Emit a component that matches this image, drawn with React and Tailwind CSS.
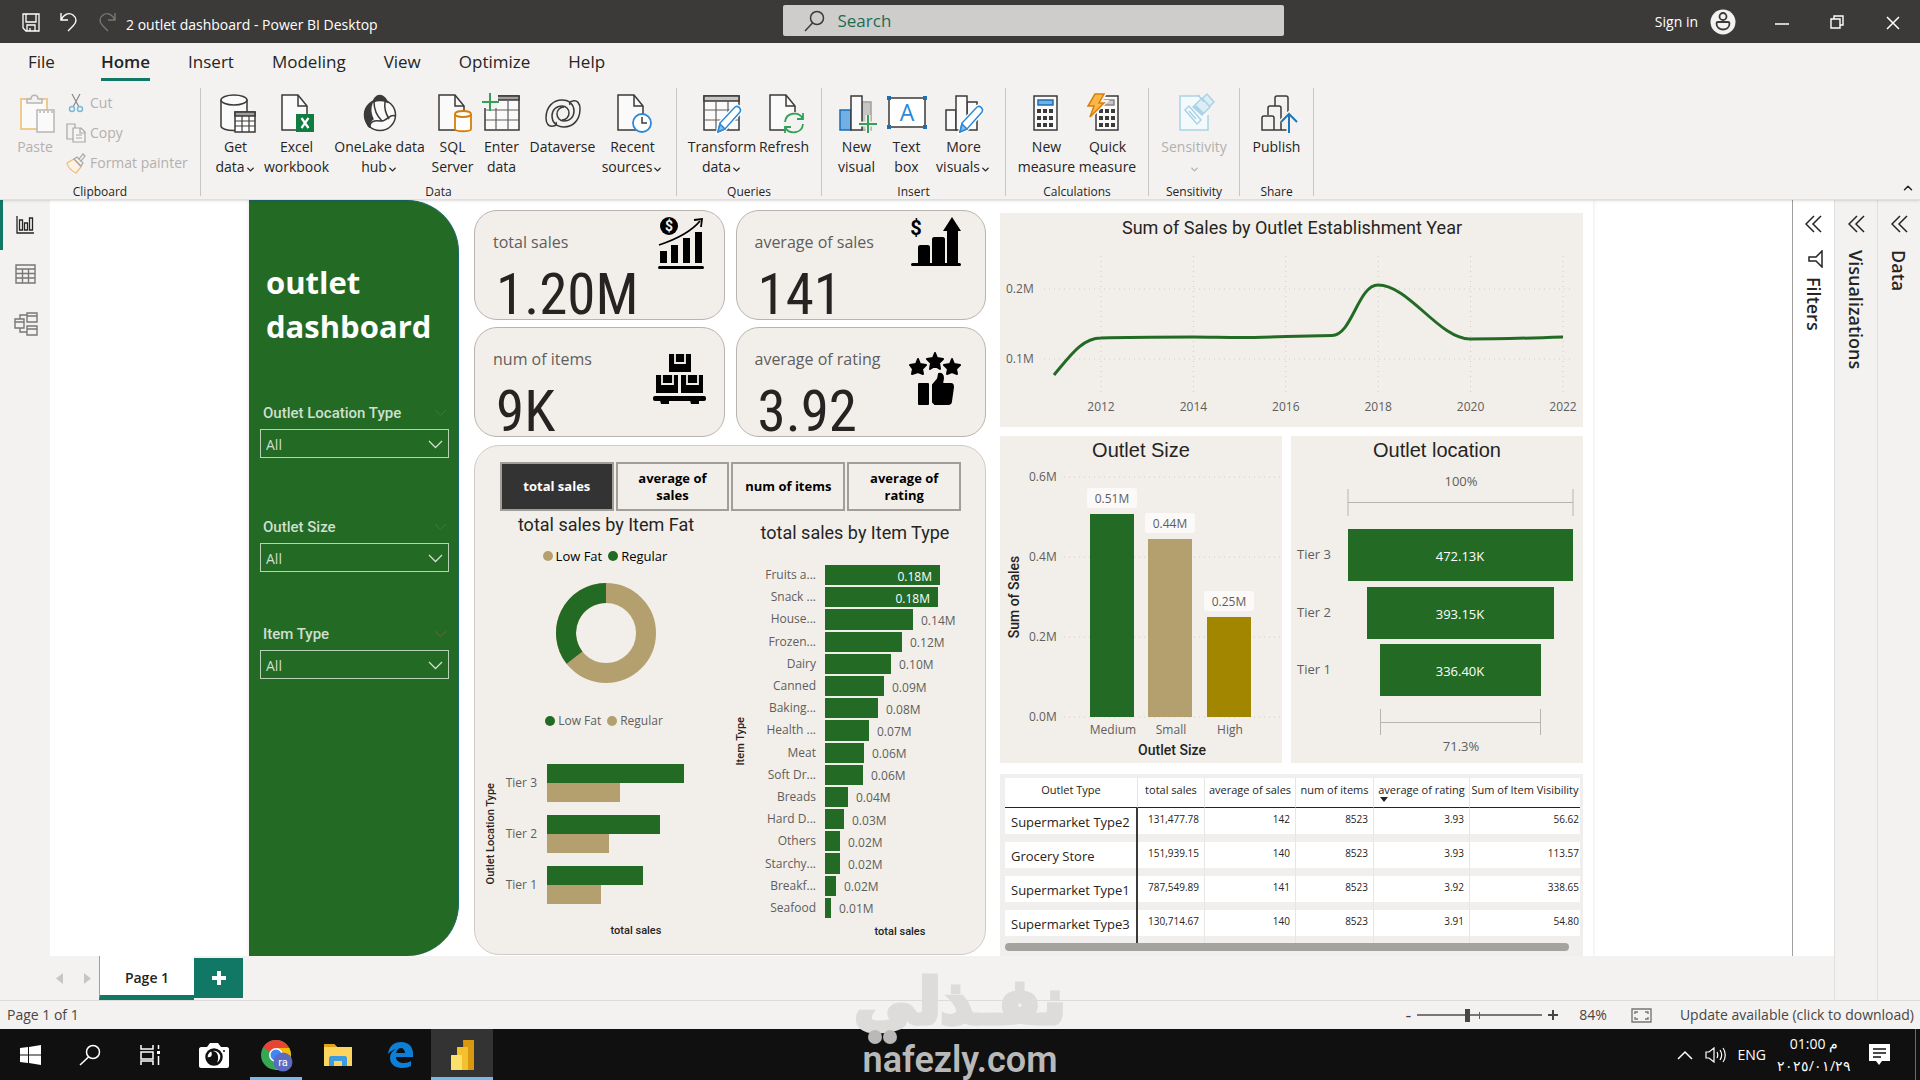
import React, { useState } from 'react';
import { ChevronDown, ChevronUp } from 'lucide-react';

const GREEN = '#236b25';
const TAN = '#b3a06e';
const GOLD = '#a38600';

const MENU = ['File', 'Home', 'Insert', 'Modeling', 'View', 'Optimize', 'Help'];

const ITEM_TYPES = [
  { name: 'Fruits a...', value: '0.18M', width: 115, inside: true },
  { name: 'Snack ...', value: '0.18M', width: 113, inside: true },
  { name: 'House...', value: '0.14M', width: 88 },
  { name: 'Frozen...', value: '0.12M', width: 77 },
  { name: 'Dairy', value: '0.10M', width: 66 },
  { name: 'Canned', value: '0.09M', width: 59 },
  { name: 'Baking...', value: '0.08M', width: 53 },
  { name: 'Health ...', value: '0.07M', width: 44 },
  { name: 'Meat', value: '0.06M', width: 39 },
  { name: 'Soft Dr...', value: '0.06M', width: 38 },
  { name: 'Breads', value: '0.04M', width: 23 },
  { name: 'Hard D...', value: '0.03M', width: 19 },
  { name: 'Others', value: '0.02M', width: 15 },
  { name: 'Starchy...', value: '0.02M', width: 15 },
  { name: 'Breakf...', value: '0.02M', width: 11 },
  { name: 'Seafood', value: '0.01M', width: 6 },
];

const TIERS = [
  { name: 'Tier 3', low: 137, regular: 73 },
  { name: 'Tier 2', low: 113, regular: 62 },
  { name: 'Tier 1', low: 96, regular: 54 },
];

const OUTLETS = [
  { type: 'Supermarket Type2', sales: '131,477.78', avg: '142', items: '8523', rating: '3.93', vis: '56.62' },
  { type: 'Grocery Store', sales: '151,939.15', avg: '140', items: '8523', rating: '3.93', vis: '113.57' },
  { type: 'Supermarket Type1', sales: '787,549.89', avg: '141', items: '8523', rating: '3.92', vis: '338.65' },
  { type: 'Supermarket Type3', sales: '130,714.67', avg: '140', items: '8523', rating: '3.91', vis: '54.80' },
];

/* ---------- ribbon icons ---------- */

function Icon({ children, w = 40, h = 40 }) {
  return (
    <svg width={w} height={h} viewBox={`0 0 ${w} ${h}`} fill="none" stroke="#3b3a39" strokeWidth="1.5" overflow="visible" aria-hidden="true">
      {children}
    </svg>
  );
}

const Page = ({ x = 6 }) => (
  <g transform={`translate(${x} 0)`}>
    <path d="M1 2h16l9 11v24H1z" fill="#fafafa" />
    <path d="M17 2v11h9" />
  </g>
);

const Pencil = () => (
  <g stroke="#2b88d8">
    <path d="M17 39l2-9 15-16c3-2 7 2 5 5L24 36z" fill="#fff" stroke="#fff" strokeWidth="4" />
    <path d="M17 39l2-9 15-16c3-2 7 2 5 5L24 36z" fill="#fff" />
    <path d="M17 39l2-8 5 5z" fill="#83beec" />
  </g>
);

const GetDataIcon = () => (
  <Icon>
    <path d="M5 7v26c0 2.500 5.500 4.500 13 4.500 7 0 13-2 13-4.500V7" fill="#fafafa" />
    <ellipse cx="18" cy="7" rx="13" ry="5" fill="#fafafa" />
    <path d="M19 19h20v20H19z" fill="#fff" />
    <path d="M19 19h20v4H19z" fill="#a19f9d" />
    <path d="M19 28h20M19 33h20M26 23v16M33 23v16" strokeWidth="1.200" />
  </Icon>
);

const ExcelIcon = () => (
  <Icon>
    <Page x={4} />
    <path d="M19 21h18v18H19z" fill="#107c41" stroke="none" />
    <path d="M24.500 25l7 10M31.500 25l-7 10" stroke="#fff" strokeWidth="2.200" />
  </Icon>
);

const OneLakeIcon = () => (
  <Icon>
    <circle cx="20" cy="22" r="15.500" fill="#fafafa" />
    <path d="M13 9C15 3 19 1.500 22 3c2 1 4 3 5 6-5-2-9-2-14 0z" fill="#3b3a39" />
    <path d="M12 10C5 14 3 22 7 30c1 3 2 4 3 4-1-4 0-6 3-8-3-6-3-11-1-16z" fill="#3b3a39" />
    <path d="M14 9c0 8 4 15 8 19M10 35c-1-6 4-8 10-7 7 1 10-8 15-5M25 9c-1 6 1 12 4 17" />
  </Icon>
);

const SqlIcon = () => (
  <Icon>
    <Page x={5} />
    <path d="M22 21v15c0 3 16 3 16 0V21" fill="#fff" stroke="#d67f0b" strokeWidth="1.800" />
    <ellipse cx="30" cy="21" rx="8" ry="3" fill="#fff" stroke="#d67f0b" strokeWidth="1.800" />
  </Icon>
);

const EnterIcon = () => (
  <Icon>
    <path d="M3 3h34v34H3z" fill="#fafafa" />
    <path d="M14 3h23v4H14z" fill="#a19f9d" />
    <path d="M3 17h34M3 27h34M14 8v29M26 8v29" strokeWidth="1.200" stroke="#605e5c" />
    <path d="M0 0h16v15H0z" fill="#f3f2f1" stroke="none" />
    <path d="M8 0v18M0 9h17" stroke="#33a05a" strokeWidth="2" />
  </Icon>
);

const DataverseIcon = () => (
  <Icon>
    <path d="M10 33c-4 1-7-2-7-8C3 14 10 7 19 7c8 0 12 5 12 11 0 6-4 10-10 10-4 0-7-3-7-7 0-4 3-7 7-7" />
    <path d="M30 8c4-1 7 2 7 8 0 11-7 18-16 18-8 0-12-5-12-11 0-6 4-10 10-10 4 0 7 3 7 7 0 4-3 7-7 7" />
    <path d="M10 33c3 0 4-2 3-4M30 8c-3 0-4 2-3 4" />
  </Icon>
);

const RecentIcon = () => (
  <Icon>
    <Page x={4} />
    <circle cx="29" cy="30" r="9" fill="#fff" stroke="#2b88d8" strokeWidth="1.800" />
    <path d="M29 24v6h5" />
  </Icon>
);

const TransformIcon = () => (
  <Icon w={42}>
    <path d="M3 3h35v34H3z" fill="#fafafa" />
    <path d="M3 3h35v5H3z" fill="#c8c6c4" />
    <path d="M3 17h35M3 27h35M15 8v29M27 8v29" strokeWidth="1.200" stroke="#605e5c" />
    <Pencil />
  </Icon>
);

const RefreshIcon = () => (
  <Icon>
    <Page x={5} />
    <circle cx="30" cy="30" r="11" fill="#f3f2f1" stroke="none" />
    <path d="M21 29c1-10 14-11 18-3M39 31c-1 10-14 11-18 3M39 20v6h-6M21 40v-6h6" stroke="#33a05a" strokeWidth="1.800" />
  </Icon>
);

const NewVisualIcon = () => (
  <Icon>
    <path d="M3 17h11v20H3z" fill="#71afe5" stroke="#1a6fb5" />
    <path d="M25 9h9v28h-9z" fill="#c8c6c4" stroke="#a19f9d" />
    <path d="M14 3h11v34H14z" fill="#fafafa" />
    <path d="M31 22v18M22 31h18" stroke="#f3f2f1" strokeWidth="5" />
    <path d="M31 22v18M22 31h18" stroke="#33a05a" strokeWidth="2" />
  </Icon>
);

const TextBoxIcon = () => (
  <Icon>
    <path d="M2 5h36v29H2z" fill="#fff" />
    <text x="20" y="28" textAnchor="middle" stroke="none" fill="#2b88d8" fontSize="23" fontFamily="Open Sans">A</text>
    <path d="M0 3h4v4H0zM36 3h4v4h-4zM0 32h4v4H0zM36 32h4v4h-4z" fill="#1a6fb5" stroke="none" />
  </Icon>
);

const MoreVisualsIcon = () => (
  <Icon w={42}>
    <path d="M3 17h10v20H3zM24 9h10v28H24z" fill="#fafafa" />
    <path d="M13 3h11v34H13z" fill="#fafafa" />
    <Pencil />
  </Icon>
);

const Keys = ({ x }) => (
  <g fill="#3b3a39" stroke="none">
    {[16, 23, 30].map(y => [0, 6, 12].map(k => <rect key={`${y}-${k}`} x={x + k} y={y} width="4" height="4" />))}
  </g>
);

const MeasureIcon = () => (
  <Icon>
    <path d="M7 3h23v34H7z" fill="#fafafa" />
    <path d="M11 7h15v5H11z" fill="#71afe5" stroke="#1a6fb5" />
    <Keys x={10} />
  </Icon>
);

const QuickIcon = () => (
  <Icon>
    <g transform="translate(-4 0)">
      <path d="M12 3h22v34H12z" fill="#fafafa" />
      <path d="M19 7h11v5H19z" fill="#c8c6c4" stroke="#8a8886" />
      <Keys x={15} />
      <path d="M11 0h10l-5 9h5L6 24l4-11H4z" fill="#ffb648" stroke="#f3f2f1" strokeWidth="4" />
      <path d="M11 1h9l-5 9h5L6 24l4-11H4z" fill="#ffb648" stroke="#d67f0b" />
    </g>
  </Icon>
);

const SensitivityIcon = () => (
  <Icon>
    <g stroke="#a9d3e6">
      <path d="M26 3H6v34h28V22" fill="#f4fafc" />
      <path d="M11 17l4-4 12 14-4 4zM15 18l7 8" />
      <path d="M19 14l9-9 8 9-8 8zM24 2l6 7M29 5l4-4 7 8-5 5" fill="#dcedf5" />
      <path d="M21 13l8 8" strokeWidth="3" />
    </g>
  </Icon>
);

const PublishIcon = () => (
  <Icon>
    <g transform="translate(3 0)">
      <path d="M15 13V5c0-1 1-2 2-2h9c1 0 2 1 2 2v14M8 22v-7c0-1 1-2 2-2h9c1 0 2 1 2 2v22M2 37V25c0-1 1-2 2-2h8c1 0 2 1 2 2v12zM14 37h14" />
      <path d="M29 40V22M21 29l8-8 8 8" stroke="#f3f2f1" strokeWidth="5" />
      <path d="M29 40V22M21 29l8-8 8 8" stroke="#1f77b4" strokeWidth="2" />
    </g>
  </Icon>
);

const PasteIcon = () => (
  <Icon>
    <g stroke="#f0c98d" strokeWidth="2">
      <path d="M6 6h26v30H6z" fill="#fbfaf8" />
    </g>
    <path d="M12 10V6h4c0-5 7-5 7 0h4v4z" fill="#f3f2f1" stroke="#b8b6b4" />
    <path d="M22 17h17v22H22z" fill="#fafafa" stroke="#b8b6b4" />
    <path d="M24 19h14" stroke="#b8b6b4" strokeDasharray="2 2" />
  </Icon>
);

const CutIcon = () => (
  <Icon w={20} h={20}>
    <path d="M6 1l7 13M14 1L7 14" stroke="#8a8886" strokeWidth="1.200" />
    <circle cx="6" cy="16" r="2.500" stroke="#7db8dc" />
    <circle cx="14" cy="16" r="2.500" stroke="#7db8dc" />
  </Icon>
);

const CopyIcon = () => (
  <Icon w={20} h={20}>
    <g stroke="#a8a6a4" strokeWidth="1.200">
      <path d="M1 1h8v15H1z" />
      <path d="M7 5h8l4 4v10H7z" fill="#f6f5f4" />
      <path d="M14 5v5h5M10 12h6M10 15h6" />
    </g>
  </Icon>
);

const PainterIcon = () => (
  <Icon w={20} h={20}>
    <path d="M1 10l7-4 7 8-5 6c-4-2-8-5-9-10z" fill="#fbf3e6" stroke="#efb878" strokeWidth="1.200" />
    <path d="M8 6l3-2 6 6-2 3zM13 6l4-5 2 2-4 5" fill="#f3f2f1" stroke="#a8a6a4" strokeWidth="1.200" />
  </Icon>
);

const RIBBON = [
  {
    name: 'Data',
    box: 'w-[476px]',
    items: [
      { lines: ['Get', 'data'], more: true, icon: GetDataIcon, box: 'w-14' },
      { lines: ['Excel', 'workbook'], icon: ExcelIcon, box: 'w-[66px]' },
      { lines: ['OneLake data', 'hub'], more: true, icon: OneLakeIcon, box: 'w-[100px]' },
      { lines: ['SQL', 'Server'], icon: SqlIcon, box: 'w-[46px]' },
      { lines: ['Enter', 'data'], icon: EnterIcon, box: 'w-[52px]' },
      { lines: ['Dataverse'], icon: DataverseIcon, box: 'w-[70px]' },
      { lines: ['Recent', 'sources'], more: true, icon: RecentIcon, box: 'w-[70px]' },
    ],
  },
  {
    name: 'Queries',
    box: 'w-[145px]',
    items: [
      { lines: ['Transform', 'data'], more: true, icon: TransformIcon, box: 'w-[70px]' },
      { lines: ['Refresh'], icon: RefreshIcon, box: 'w-[54px]' },
    ],
  },
  {
    name: 'Insert',
    box: 'w-[184px]',
    items: [
      { lines: ['New', 'visual'], icon: NewVisualIcon, box: 'w-[46px]' },
      { lines: ['Text', 'box'], icon: TextBoxIcon, box: 'w-[54px]' },
      { lines: ['More', 'visuals'], more: true, icon: MoreVisualsIcon, box: 'w-[60px]' },
    ],
  },
  {
    name: 'Calculations',
    box: 'w-[143px]',
    items: [
      { lines: ['New', 'measure'], icon: MeasureIcon, box: 'w-[61px]' },
      { lines: ['Quick', 'measure'], icon: QuickIcon, box: 'w-[61px]' },
    ],
  },
  {
    name: 'Sensitivity',
    box: 'w-[91px]',
    items: [{ lines: ['Sensitivity', ''], more: true, disabled: true, icon: SensitivityIcon, box: 'w-[76px]' }],
  },
  {
    name: 'Share',
    box: 'w-[75px]',
    items: [{ lines: ['Publish'], icon: PublishIcon, box: 'w-[60px]' }],
  },
];

/* ---------- window chrome ---------- */

function TitleBar() {
  return (
    <header className="relative flex h-[43px] items-center bg-[#3b3a39] text-white">
      <div className="flex items-center gap-5 pl-[22px] pt-px">
        <button aria-label="Save">
          <svg width="18" height="19" viewBox="0 0 18 19" fill="none" stroke="#fff" strokeWidth="1.300">
            <path d="M1 1h16v17H4l-3-3zM4 1v8h10V1M5 18v-6h8v6M8 18v-3" />
          </svg>
        </button>
        <button aria-label="Undo">
          <svg width="18" height="20" viewBox="0 0 18 20" fill="none" stroke="#fff" strokeWidth="1.400">
            <path d="M1 1v7h7M1 8c3-6 8-8 12-5 4 3 4 7 0 11l-5 5" />
          </svg>
        </button>
        <button aria-label="Redo" disabled>
          <svg width="18" height="20" viewBox="0 0 18 20" fill="none" stroke="#797775" strokeWidth="1.400">
            <path d="M17 1v7h-7M17 8c-3-6-8-8-12-5-4 3-4 7 0 11l5 5" />
          </svg>
        </button>
      </div>
      <span className="pl-[10px] pt-[6px] text-sm">2 outlet dashboard - Power BI Desktop</span>

      <div className="absolute inset-x-0 top-[5px] mx-auto flex h-[31px] w-[501px] translate-x-[73px] items-center rounded-xs bg-[#cecdcc] pl-[21px]">
        <svg width="21" height="22" viewBox="0 0 21 22" fill="none" stroke="#3b3a39" strokeWidth="1.500">
          <circle cx="13" cy="8" r="6.500" />
          <path d="M8.500 13L1 21" />
        </svg>
        <input
          aria-label="Search"
          placeholder="Search"
          className="ml-[13px] flex-1 bg-transparent text-[17px] outline-none placeholder:text-[#1f6b52]"
        />
      </div>

      <div className="ml-auto flex items-center">
        <button className="flex items-center gap-[12px] text-sm">
          Sign in
          <svg width="26" height="26" viewBox="0 0 26 26" fill="none" stroke="#3b3a39" strokeWidth="1.800">
            <circle cx="13" cy="13" r="12.500" fill="#f3f2f1" stroke="none" />
            <circle cx="13" cy="7.500" r="3.500" />
            <path d="M6.500 14.500c0-1 .5-1.500 1.500-1.500h10c1 0 1.500.5 1.500 1.500 0 8-13 8-13 0z" />
          </svg>
        </button>
        <button aria-label="Minimize" className="ml-[38px]">
          <svg width="16" height="16" stroke="#fff" strokeWidth="1.500"><path d="M1 10h14" /></svg>
        </button>
        <button aria-label="Restore" className="ml-[40px]">
          <svg width="15" height="16" viewBox="0 0 15 16" fill="none" stroke="#fff" strokeWidth="1.400">
            <path d="M1 5h9v9H1zM4 5V2h9v9h-3" />
          </svg>
        </button>
        <button aria-label="Close" className="ml-[41px] mr-[20px]">
          <svg width="14" height="16" viewBox="0 0 14 16" stroke="#fff" strokeWidth="1.500">
            <path d="M1 3l12 12M13 3L1 15" />
          </svg>
        </button>
      </div>
    </header>
  );
}

function RibbonButton({ item }) {
  const Glyph = item.icon;
  return (
    <button
      disabled={item.disabled}
      className={`${item.box} flex flex-col items-center text-sm leading-5 whitespace-nowrap ${item.disabled ? 'text-[#b3b0ad]' : ''}`}
    >
      <Glyph />
      <span className="mt-1">{item.lines[0]}</span>
      {item.lines.length > 1 && (
        <span className="flex h-5 items-center">
          {item.lines[1]}
          {item.more && <ChevronDown size={11} strokeWidth={3} className="mt-1" />}
        </span>
      )}
    </button>
  );
}

function Ribbon() {
  return (
    <div className="relative z-10 border-b border-[#e1dfdd] bg-[#f3f2f1] text-[#252423] shadow-sm">
      <nav className="flex h-[38px] gap-[38px] pl-[28px] text-[17px]">
        {MENU.map(m => (
          <button
            key={m}
            className={`h-[38px] border-b-3 pt-[2px] leading-6 ${m === 'Home' ? 'ml-[8px] border-[#117865] font-semibold' : 'border-transparent'}`}
          >
            {m}
          </button>
        ))}
      </nav>
      <div className="flex h-[118px] pt-[7px]">
        <section className="flex w-[200px] flex-col">
          <div className="flex pl-[15px] pt-[5px] text-sm text-[#b3b0ad]">
            <button className="flex w-10 flex-col items-center leading-5" disabled>
              <PasteIcon />
              <span className="mt-1">Paste</span>
            </button>
            <div className="ml-[11px] flex flex-col gap-[10px]">
              <button className="flex items-center gap-1 leading-5" disabled><CutIcon />Cut</button>
              <button className="flex items-center gap-1 leading-5" disabled><CopyIcon />Copy</button>
              <button className="flex items-center gap-1 leading-5 whitespace-nowrap" disabled><PainterIcon />Format painter</button>
            </div>
          </div>
          <span className="-mb-px mt-auto text-center text-xs">Clipboard</span>
        </section>
        {RIBBON.map((g, i) => (
          <section
            key={g.name}
            className={`${g.box} mb-[3px] flex flex-col border-l border-[#c8c6c4] ${i === RIBBON.length - 1 ? 'border-r' : ''}`}
          >
            <div className={`flex justify-center pt-[5px] ${i === 0 ? 'pr-[2px]' : ''}`}>
              {g.items.map(item => <RibbonButton key={item.lines[0]} item={item} />)}
            </div>
            <span className="-mb-1 mt-auto text-center text-xs">{g.name}</span>
          </section>
        ))}
        <button aria-label="Collapse ribbon" className="ml-auto self-end pb-1 pr-[5px]">
          <ChevronUp size={14} strokeWidth={2.5} />
        </button>
      </div>
    </div>
  );
}

function ViewRail() {
  return (
    <nav className="flex w-[50px] shrink-0 flex-col bg-[#f3f2f1]">
      <button aria-label="Report view" className="flex h-[50px] items-center border-l-3 border-[#117865] pl-[13px]">
        <svg width="18" height="18" viewBox="0 0 18 18" fill="none" stroke="#252423" strokeWidth="1.300">
          <path d="M1 0v17h17M3.500 4h3v10h-3zM8.500 7h3v7h-3zM13.500 2h3v12h-3z" />
        </svg>
      </button>
      <button aria-label="Table view" className="flex h-[48px] items-center pl-[15px]">
        <svg width="21" height="20" viewBox="0 0 21 20" fill="none" stroke="#797775" strokeWidth="1.400">
          <path d="M1 1h19v18H1zM1 5h19M1 9.500h19M1 14h19M7.500 5v14M13.500 5v14" />
        </svg>
      </button>
      <button aria-label="Model view" className="flex h-[52px] items-center pl-[14px]">
        <svg width="24" height="24" viewBox="0 0 24 24" fill="none" stroke="#797775" strokeWidth="1.400">
          <path d="M1 7h9v9H1zM1 10h9M13 1h10v9H13zM13 4h10M13 14h10v9H13zM13 17h10M6 7V3h7M6 16v4h7" />
        </svg>
      </button>
    </nav>
  );
}

/* ---------- report page ---------- */

function Slicer({ id, label }) {
  return (
    <div>
      <div className="flex h-[18px] items-center justify-between pl-[3px] pr-[2px]">
        <label htmlFor={id} className="font-[Roboto] text-[15px] font-medium text-[#d0dfcf]">{label}</label>
        <svg width="13" height="8" fill="none" stroke="#5a6a3a"><path d="M1 1l5.500 5.500L12 1" /></svg>
      </div>
      <div className="relative mt-[7px]">
        <select
          id={id}
          className="h-[29px] w-full appearance-none border border-[#b9d3b8] bg-transparent pl-[5px] pt-[2px] text-sm text-[#d0dfcf]"
        >
          <option>All</option>
        </select>
        <svg className="pointer-events-none absolute right-[6px] top-[11px]" width="15" height="9" fill="none" stroke="#d0dfcf" strokeWidth="1.300">
          <path d="M1 1l6.500 6.500L14 1" />
        </svg>
      </div>
    </div>
  );
}

function SidePanel() {
  return (
    <aside className="w-[210px] shrink-0 rounded-r-[52px] border-r border-t border-[#1c6a6c] bg-[#236b25] pl-[11px] pr-[9px]">
      <h1 className="pl-[6px] pt-[59px] text-[31px] font-bold leading-[44px] text-white">outlet dashboard</h1>
      <div className="mt-[56px]">
        <Slicer id="slicer-location" label="Outlet Location Type" />
      </div>
      <div className="mt-[60px]">
        <Slicer id="slicer-size" label="Outlet Size" />
      </div>
      <div className="mt-[53px]">
        <Slicer id="slicer-type" label="Item Type" />
      </div>
    </aside>
  );
}

const SalesGrowthIcon = () => (
  <svg width="46" height="52" viewBox="0 0 46 52">
    <circle cx="11" cy="9" r="9" />
    <text x="11" y="14" textAnchor="middle" fill="#f2efea" fontSize="14" fontWeight="700" fontFamily="Roboto">$</text>
    <path d="M1 28C16 23 32 16 42 4" fill="none" stroke="#000" strokeWidth="1.800" />
    <path d="M36 3l8-1-1 8" fill="none" stroke="#000" strokeWidth="1.800" />
    <path d="M2 34h7v12H2zM13 28h7v18h-7zM25 21h7v25h-7zM37 15h7v31h-7z" />
    <rect y="49" width="46" height="3" rx="1.500" />
  </svg>
);

const AverageSalesIcon = () => (
  <svg width="50" height="50" viewBox="0 0 50 50">
    <text x="5" y="18" textAnchor="middle" fontSize="20" fontWeight="700" fontFamily="Roboto">$</text>
    <path d="M7 30c0-1 1-2 2-2h8c1 0 2 1 2 2v17H7zM21 22c0-1 1-2 2-2h9c1 0 2 1 2 2v25H21zM36 14h-4l9-14 9 14h-3v33H36z" />
    <rect y="46" width="50" height="3" rx="1.500" />
  </svg>
);

const BoxesIcon = () => (
  <svg width="53" height="50" viewBox="0 0 53 50">
    <path d="M16 0h22v18H16zM3 21h22v18H3zM28 21h22v18H28z" />
    <g fill="none" stroke="#f2efea" strokeWidth="1.800">
      <path d="M22 0v9h10V0M9 21v9h11v-9M34 21v9h11v-9" />
    </g>
    <path d="M25 1h3v5h-3zM13 22h3v5h-3zM38 22h3v5h-3z" />
    <rect y="42" width="53" height="5" rx="2" />
    <path d="M7 46h9v4H8zM37 46h9v4h-8z" />
  </svg>
);

const RatingIcon = () => (
  <svg width="52" height="53" viewBox="0 0 52 53">
    <g strokeLinejoin="round" stroke="#000" strokeWidth="2">
      <path d="M26 1l2 5 6 1-4 4 1 6-5-3-5 3 1-6-4-4 6-1z" />
      <path d="M9 7l2 5 6 1-4 4 1 5-5-2-6 2 1-5-3-4 6-1z" />
      <path d="M43 7l2 5 6 1-4 4 1 5-5-2-5 2 1-5-4-4 6-1z" />
      <path d="M10 32h9v20h-9zM24 33l5-6 1-5c2-1 4 1 4 4l-1 6h9c2 0 2 1 2 3l-2 14c0 2-1 3-3 3H26l-2-2z" />
    </g>
  </svg>
);

const KPIS = [
  { label: 'total sales', value: '1.20M', icon: SalesGrowthIcon, pad: 'pt-[6px] pr-5' },
  { label: 'average of sales', value: '141', icon: AverageSalesIcon, pad: 'pt-[6px] pr-6' },
  { label: 'num of items', value: '9K', icon: BoxesIcon, pad: 'pt-[26px] pr-[18px]' },
  { label: 'average of rating', value: '3.92', icon: RatingIcon, pad: 'pt-6 pr-6' },
];

function KpiCard({ kpi }) {
  const Glyph = kpi.icon;
  return (
    <div className="flex h-[110px] justify-between rounded-[23px] border border-[#b8b4af] bg-[#f2efea] pl-[18px]">
      <div className="pt-[21px]">
        <div className="text-base leading-5 text-[#605e5c]">{kpi.label}</div>
        <div className="mt-[19px] pl-[3px] font-['Roboto_Condensed',Roboto,sans-serif] text-[57px] leading-[48px] text-[#252423]">{kpi.value}</div>
      </div>
      <div className={kpi.pad}><Glyph /></div>
    </div>
  );
}

function Legend({ items, className }) {
  return (
    <div className={`flex items-center justify-center gap-[6px] ${className}`}>
      {items.map(([name, color]) => (
        <span key={name} className="flex items-center gap-[3px]">
          <svg width="10" height="10"><circle cx="5" cy="5" r="5" fill={color} /></svg>
          {name}
        </span>
      ))}
    </div>
  );
}

function FatColumn() {
  return (
    <div className="flex w-[250px] flex-col">
      <h2 className="pl-3 text-center font-[Roboto] text-lg leading-7 text-[#252423]">total sales by Item Fat</h2>
      <Legend className="mt-[7px] pl-[10px] text-[13px] leading-5 text-black" items={[['Low Fat', TAN], ['Regular', GREEN]]} />
      <svg className="ml-[81px] mt-[17px]" width="100" height="100" viewBox="0 0 100 100" fill="none" strokeWidth="20">
        <circle cx="50" cy="50" r="40" stroke={TAN} />
        {/* regular share, 232deg to 360deg */}
        <path d="M18.500 74.600A40 40 0 0 1 50 10" stroke={GREEN} />
      </svg>
      <Legend className="mt-7 pl-2 text-xs leading-5 text-[#605e5c]" items={[['Low Fat', GREEN], ['Regular', TAN]]} />
      <div className="mt-[33px] flex">
        <span className="w-[24px] rotate-180 self-center pr-[8px] text-center font-[Roboto] text-[11px] font-medium leading-4 text-[#252423] [writing-mode:vertical-rl]">
          Outlet Location Type
        </span>
        <div className="flex flex-1 flex-col gap-[13px]">
          {TIERS.map(t => (
            <div key={t.name} className="flex items-center">
              <span className="w-[38px] text-right text-xs text-[#605e5c]">{t.name}</span>
              <div className="ml-[10px]">
                <div className="h-[19px] bg-[#236b25]" style={{ width: t.low }} />
                <div className="h-[19px] bg-[#b3a06e]" style={{ width: t.regular }} />
              </div>
            </div>
          ))}
        </div>
      </div>
      <span className="mt-[19px] pl-[72px] text-center font-[Roboto] text-[11px] font-medium leading-4 text-[#252423]">total sales</span>
    </div>
  );
}

function TypeColumn() {
  return (
    <div className="flex flex-1 flex-col pt-[8px]">
      <h2 className="text-center font-[Roboto] text-lg leading-7 text-[#252423]">total sales by Item Type</h2>
      <div className="mt-[18px] flex h-[353px]">
        <span className="w-[25px] rotate-180 self-center pr-[8px] text-center font-[Roboto] text-[11px] font-medium leading-4 text-[#252423] [writing-mode:vertical-rl]">
          Item Type
        </span>
        <div className="flex flex-1 flex-col gap-[2px] text-xs">
          {ITEM_TYPES.map(t => (
            <div key={t.name} className="flex flex-1 items-center">
              <span className="w-[66px] text-right leading-4 text-[#605e5c]">{t.name}</span>
              <div className="ml-[9px] flex h-full items-center justify-end bg-[#236b25]" style={{ width: t.width }}>
                {t.inside && <span className="pr-[8px] pt-[3px] leading-4 text-white">{t.value}</span>}
              </div>
              {!t.inside && <span className="pl-[8px] pt-[3px] leading-4 text-[#605e5c]">{t.value}</span>}
            </div>
          ))}
        </div>
      </div>
      <span className="mt-[6px] pl-[90px] text-center font-[Roboto] text-[11px] font-medium leading-4 text-[#252423]">total sales</span>
    </div>
  );
}

function SalesPanel() {
  const [active, setActive] = useState('total sales');
  return (
    <section className="mt-[8px] h-[510px] rounded-[25px] border border-[#cfccc8] bg-[#f2efea] pt-4">
      <div className="ml-[25px] mr-6 flex gap-[2px]">
        {['total sales', 'average of sales', 'num of items', 'average of rating'].map(t => (
          <button
            key={t}
            onClick={() => setActive(t)}
            className={`h-[49px] flex-1 border-2 border-[#a19d99] px-3 text-[13px] font-bold leading-[17px] whitespace-nowrap ${t === active ? 'bg-[#333333] text-white' : 'text-black'}`}
          >
            {t.length > 12 ? <>{t.split(' ').slice(0, 2).join(' ')}<br />{t.split(' ')[2]}</> : t}
          </button>
        ))}
      </div>
      <div className="flex">
        <FatColumn />
        <TypeColumn />
      </div>
    </section>
  );
}

const GRID = { stroke: '#cfccc8', strokeDasharray: '1 4' };

function YearChart() {
  return (
    <section className="bg-[#f2efea]">
      <svg viewBox="0 0 583 214" className="block w-full font-['Open_Sans',sans-serif]" fontSize="12" fill="#605e5c">
        <text x="292" y="21" textAnchor="middle" fontSize="18" fontFamily="Roboto" fill="#252423">Sum of Sales by Outlet Establishment Year</text>
        {[['0.2M', 76], ['0.1M', 146]].map(([t, y]) => (
          <g key={t}>
            <path d={`M44 ${y}H572`} {...GRID} />
            <text x="6" y={y + 4}>{t}</text>
          </g>
        ))}
        {[2012, 2014, 2016, 2018, 2020, 2022].map((t, i) => (
          <g key={t}>
            <path d={`M${101 + i * 92.4} 43V182`} {...GRID} />
            <text x={101 + i * 92.4} y="198" textAnchor="middle">{t}</text>
          </g>
        ))}
        <path
          d="M54 162C70 143 82 125 101 125C132 124 162 124 193 124C209 124 224 124.500 240 124.500C255 124.500 271 124 286 123.500L332 122.500C352 122.500 358 72 378 72C409 72 439 126 470 126C501 126 532 125 563 124"
          fill="none"
          stroke={GREEN}
          strokeWidth="3"
        />
      </svg>
    </section>
  );
}

function SizeChart() {
  const bars = [
    { name: 'Medium', value: '0.51M', x: 90, y: 78, fill: GREEN },
    { name: 'Small', value: '0.44M', x: 148, y: 103, fill: TAN },
    { name: 'High', value: '0.25M', x: 207, y: 181, fill: GOLD },
  ];
  return (
    <section className="w-[282px] bg-[#f2efea]">
      <svg viewBox="0 0 282 327" className="block w-full font-['Open_Sans',sans-serif]" fontSize="12" fill="#605e5c">
        <text x="141" y="21" textAnchor="middle" fontSize="20" fontFamily="Liberation Sans" fill="#252423">Outlet Size</text>
        {['0.6M', '0.4M', '0.2M', '0.0M'].map((t, i) => (
          <g key={t}>
            <path d={`M64 ${41 + i * 80}H280`} {...GRID} />
            <text x="29" y={45 + i * 80}>{t}</text>
          </g>
        ))}
        {bars.map(b => (
          <g key={b.name}>
            <rect x={b.x} y={b.y} width="44" height={281 - b.y} fill={b.fill} />
            <rect x={b.x - 3} y={b.y - 26} width="50" height="20" rx="3" fill="#fbfaf9" />
            <text x={b.x + 22} y={b.y - 11} textAnchor="middle">{b.value}</text>
            <text x={b.x + 23} y="298" textAnchor="middle">{b.name}</text>
          </g>
        ))}
        <text x="172" y="319" textAnchor="middle" fontSize="14" fontWeight="500" fontFamily="Roboto" fill="#252423">Outlet Size</text>
        <text transform="translate(19 161) rotate(-90)" textAnchor="middle" fontSize="14" fontWeight="500" fontFamily="Roboto" fill="#252423">Sum of Sales</text>
      </svg>
    </section>
  );
}

function LocationFunnel() {
  const bars = [
    { name: 'Tier 3', value: '472.13K', x: 57, w: 225, y: 93 },
    { name: 'Tier 2', value: '393.15K', x: 76, w: 187, y: 151 },
    { name: 'Tier 1', value: '336.40K', x: 89, w: 161, y: 208 },
  ];
  return (
    <section className="w-[292px] bg-[#f2efea]">
      <svg viewBox="0 0 292 327" className="block w-full font-['Open_Sans',sans-serif]" fontSize="13" fill="#605e5c">
        <text x="146" y="21" textAnchor="middle" fontSize="20" fontFamily="Liberation Sans" fill="#252423">Outlet location</text>
        <text x="170" y="50" textAnchor="middle">100%</text>
        <path d="M57 53v27M57 66.500h225M282 53v27M89.500 273v26M89.500 286.500h160M249.500 273v26" fill="none" stroke="#b8b5b1" />
        {bars.map(b => (
          <g key={b.name}>
            <text x="6" y={b.y + 30}>{b.name}</text>
            <rect x={b.x} y={b.y} width={b.w} height="52" fill={GREEN} />
            <text x="169" y={b.y + 32} textAnchor="middle" fill="#fff">{b.value}</text>
          </g>
        ))}
        <text x="170" y="315" textAnchor="middle">71.3%</text>
      </svg>
    </section>
  );
}

function OutletTable() {
  const num = 'border-r border-[#e8e6e4] pr-[5px] pb-[12px] text-right text-[10px] font-medium';
  return (
    <section className="min-w-0 flex-1 bg-[#f1efed] pl-[5px] pr-[3px] pt-[4px]">
      <table className="w-full table-fixed border-separate border-spacing-0 text-[#252423]">
        <colgroup>
          <col className="w-[133px]" /><col className="w-[67px]" /><col className="w-[91px]" />
          <col className="w-[78px]" /><col className="w-[96px]" /><col />
        </colgroup>
        <thead>
          <tr className="h-[30px] bg-white text-[11px] whitespace-nowrap [&>th]:border-b [&>th]:border-b-[#252423] [&>th]:p-0 [&>th]:pb-1 [&>th]:font-normal [&>th:not(:last-child)]:border-r [&>th:not(:last-child)]:border-r-[#e8e6e4]">
            <th>Outlet Type</th>
            <th>total sales</th>
            <th>average of sales</th>
            <th>num of items</th>
            <th className="relative">
              average of rating
              <svg className="absolute bottom-[5px] left-[6px]" width="8" height="5"><path d="M0 0h8L4 5z" fill="#252423" /></svg>
            </th>
            <th>Sum of Item Visibility</th>
          </tr>
        </thead>
        <tbody>
          {OUTLETS.map(o => (
            <tr key={o.type} className="h-[34px] bg-[linear-gradient(#ffffff_26px,#f1efed_26px)]">
              <td className="border-r-2 border-[#3b3a39] pb-[5px] pl-[6px] text-[13px] whitespace-nowrap">{o.type}</td>
              <td className={num}>{o.sales}</td>
              <td className={num}>{o.avg}</td>
              <td className={num}>{o.items}</td>
              <td className={num}>{o.rating}</td>
              <td className="pb-[12px] pr-px text-right text-[10px] font-medium">{o.vis}</td>
            </tr>
          ))}
        </tbody>
      </table>
      <div className="relative -mt-px mr-[11px] h-2 rounded-full bg-[#a5a3a0]" />
    </section>
  );
}

function ReportPage() {
  return (
    <main className="flex flex-1 justify-center bg-white">
      <div className="flex w-[1344px] pr-[10px] shadow-[0_0_4px_rgba(0,0,0,0.12)]">
        <SidePanel />
        <div className="ml-[15px] w-[512px] shrink-0 pt-[10px]">
          <div className="grid grid-cols-2 gap-x-[11px] gap-y-[7px]">
            {KPIS.map(k => <KpiCard key={k.label} kpi={k} />)}
          </div>
          <SalesPanel />
        </div>
        <div className="ml-[14px] flex min-w-0 flex-1 flex-col gap-[9px] pt-[13px]">
          <YearChart />
          <div className="flex justify-between">
            <SizeChart />
            <LocationFunnel />
          </div>
          <div className="mt-[2px] flex flex-1">
            <OutletTable />
          </div>
        </div>
      </div>
    </main>
  );
}

/* ---------- side panes and bottom bars ---------- */

function Pane({ title, icon, className }) {
  return (
    <div className={`flex shrink-0 flex-col items-center pt-[15px] ${className}`}>
      <button aria-label={`Expand ${title}`}>
        <svg width="17" height="18" viewBox="0 0 17 18" fill="none" stroke="#252423" strokeWidth="1.500">
          <path d="M9 1L1 9l8 8M16 1L8 9l8 8" />
        </svg>
      </button>
      {icon}
      <span className={`text-lg font-semibold leading-6 [writing-mode:vertical-rl] ${icon ? 'mt-[9px]' : 'mt-[17px]'}`}>{title}</span>
    </div>
  );
}

const FunnelIcon = () => (
  <svg className="ml-1 mt-[17px]" width="15" height="18" viewBox="0 0 15 18" fill="none" stroke="#252423" strokeWidth="1.500">
    <path d="M14 1v16L8 11H1V7h7z" />
  </svg>
);

function PageTabs() {
  return (
    <div className="flex h-[44px] bg-[#f3f2f1]">
      <div className="flex w-[99px] items-center gap-[21px] pl-[56px]">
        <svg width="7" height="11"><path d="M7 0v11L0 5.500z" fill="#c8c6c4" /></svg>
        <svg width="7" height="11"><path d="M0 0v11l7-5.500z" fill="#c8c6c4" /></svg>
      </div>
      <button className="w-[95px] border-b-5 border-l border-b-[#117865] border-l-[#a19f9d] bg-white pt-1 text-sm font-semibold text-[#252423]">Page 1</button>
      <button aria-label="New page" className="mt-[2px] flex h-10 w-[49px] items-center justify-center bg-[#117865]">
        <svg width="14" height="14"><path d="M5 0h4v5h5v4H9v5H5V9H0V5h5z" fill="#fff" /></svg>
      </button>
    </div>
  );
}

function StatusBar() {
  return (
    <footer className="flex h-[29px] items-center border-t border-[#dddbd9] bg-[#f3f2f1] pl-[7px] pr-[6px] text-sm text-[#484644]">
      <span>Page 1 of 1</span>
      <div className="ml-auto flex items-center">
        <button aria-label="Zoom out" className="text-lg leading-5">-</button>
        <div className="relative ml-[6px] flex items-center">
          <input
            type="range"
            aria-label="Zoom"
            defaultValue="40"
            className="h-[2px] w-[125px] appearance-none bg-[#797775] [&::-webkit-slider-thumb]:h-[13px] [&::-webkit-slider-thumb]:w-[5px] [&::-webkit-slider-thumb]:appearance-none [&::-webkit-slider-thumb]:bg-[#484644]"
          />
          <span className="pointer-events-none absolute left-[62px] h-[7px] w-px bg-[#605e5c]" />
        </div>
        <button aria-label="Zoom in" className="ml-[6px]">
          <svg width="10" height="10" stroke="#484644" strokeWidth="2"><path d="M5 0v10M0 5h10" /></svg>
        </button>
        <span className="ml-[21px]">84%</span>
        <button aria-label="Fit to page" className="ml-[24px]">
          <svg width="21" height="15" viewBox="0 0 21 15" fill="none" stroke="#797775" strokeWidth="1.400">
            <path d="M1 1h19v13H1zM4 6V4h3M14 4h3v2M17 9v2h-3M7 11H4V9" />
          </svg>
        </button>
        <a href="#update" className="ml-[28px]">Update available (click to download)</a>
      </div>
    </footer>
  );
}

function TaskItem({ label, children, className = 'w-[62px]' }) {
  return <button aria-label={label} className={`flex items-center justify-center ${className}`}>{children}</button>;
}

function Taskbar() {
  return (
    <div className="flex h-[51px] bg-[#101010] text-white">
      <TaskItem label="Start" className="w-[60px]">
        <svg width="21" height="20" viewBox="0 0 21 20" fill="#fff"><path d="M0 3l8-1v7.500H0zM9 2l12-2v9.500H9zM0 10.500h8V18l-8-1zM9 10.500h12V20L9 18z" /></svg>
      </TaskItem>
      <TaskItem label="Search Windows" className="w-[60px]">
        <svg width="22" height="22" viewBox="0 0 22 22" fill="none" stroke="#fff" strokeWidth="1.500"><circle cx="14" cy="8" r="6.500" /><path d="M9.500 13L1 21" /></svg>
      </TaskItem>
      <TaskItem label="Task view" className="mr-[3px] w-[60px]">
        <svg width="21" height="20" viewBox="0 0 21 20" fill="none" stroke="#fff" strokeWidth="1.500">
          <path d="M1 0v4h12V0M1 7h12v7H1zM1 20v-4h12v4M18.500 0v4M18.500 11v9" />
          <path d="M17 6h3v3h-3z" fill="#fff" stroke="none" />
        </svg>
      </TaskItem>
      <TaskItem label="Camera">
        <svg width="30" height="26" viewBox="0 0 30 26" fill="#fff">
          <path d="M2 5h6l3-4h8l3 4h6c1 0 2 1 2 2v17c0 1-1 2-2 2H2c-1 0-2-1-2-2V7c0-1 1-2 2-2z" />
          <circle cx="15" cy="15" r="7.500" stroke="#101010" strokeWidth="2.500" fill="#fff" />
          <path d="M12 9c6-1 9 5 6 12-5 3-10-1-9-6 3 1 5-2 3-6z" fill="#101010" />
          <circle cx="25" cy="9" r="1" fill="#101010" />
        </svg>
      </TaskItem>
      <TaskItem label="Chrome" className="w-[62px] bg-[linear-gradient(#76b9ed,#76b9ed)] bg-[length:52px_3px] bg-bottom bg-no-repeat">
        <svg width="34" height="34" viewBox="0 0 34 34">
          <circle cx="17" cy="17" r="15" fill="#34a853" />
          <path d="M17 17L4 9.500A15 15 0 0 1 30 9.500L17 10z" fill="#ea4335" />
          <path d="M17 10h13.300A15 15 0 0 1 17 32l7-12z" fill="#fbbc04" />
          <circle cx="17" cy="17" r="7" fill="#fff" />
          <circle cx="17" cy="17" r="5.500" fill="#4285f4" />
          <circle cx="24" cy="24" r="9.500" fill="#5c6bc0" />
          <text x="24" y="28" textAnchor="middle" fontSize="11" fill="#fff" fontFamily="Roboto">ra</text>
        </svg>
      </TaskItem>
      <TaskItem label="File Explorer">
        <svg width="28" height="24" viewBox="0 0 28 24">
          <path d="M0 1h10l3 3h15v19H0z" fill="#ffd45e" />
          <path d="M0 1h10l3 3H0z" fill="#e0a11b" />
          <path d="M5 23v-8c0-1 1-2 2-2h14c1 0 2 1 2 2v8h-5v-5h-8v5z" fill="#3d9be0" />
        </svg>
      </TaskItem>
      <TaskItem label="Edge">
        <svg width="25" height="26" viewBox="0 0 25 26" fill="#0c7fd8">
          <path d="M0 12C1 4 6 0 13 0c8 0 12 5 12 12v3H8c0 4 4 6 8 6 3 0 5-1 7-2v5c-2 1-5 2-9 2C7 26 2 22 2 16c0-4 2-7 6-9-4 1-6 3-8 5zM8 11h9c0-3-2-5-4-5-3 0-4 2-5 5z" />
        </svg>
      </TaskItem>
      <TaskItem label="Power BI" className="w-[62px] border-b-3 border-[#76b9ed] bg-[#333333] pt-[3px]">
        <svg width="23" height="30" viewBox="0 0 23 30">
          <path d="M12 1c0-1 0-1 1-1h9c1 0 1 0 1 1v28c0 1 0 1-1 1h-9z" fill="#d9980f" />
          <path d="M6 8c0-1 0-1 1-1h9c1 0 1 0 1 1v22H6z" fill="#f2c12e" />
          <path d="M0 16c0-1 0-1 1-1h9c1 0 1 0 1 1v14H1c-1 0-1 0-1-1z" fill="#fbe16b" />
        </svg>
      </TaskItem>

      <div className="ml-auto flex items-center text-sm">
        <svg width="16" height="10" fill="none" stroke="#fff" strokeWidth="1.500"><path d="M1 9l7-7 7 7" /></svg>
        <svg className="ml-[12px]" width="21" height="16" viewBox="0 0 21 16" fill="none" stroke="#fff" strokeWidth="1.200">
          <path d="M1 5h3l5-4v14l-5-4H1zM12 5c1 2 1 4 0 6M15 3c2 3 2 7 0 10M18 1c3 4 3 10 0 14" />
        </svg>
        <span className="ml-[12px]">ENG</span>
        <div className="ml-[14px] flex w-[68px] flex-col items-center leading-[22px]">
          <span>01:00 م</span>
          <span className="whitespace-nowrap">٢٠٢٥/٠١/٢٩</span>
        </div>
        <svg className="ml-[21px]" width="21" height="21" viewBox="0 0 21 21">
          <path d="M0 0h21v17h-8l-3 4-3-4H0z" fill="#fff" />
          <path d="M4 5h13M4 9h13M4 13h8" stroke="#101010" strokeWidth="1.500" />
        </svg>
        <span className="ml-[25px] mr-1 h-[51px] w-px bg-[#6b6b6b]" />
      </div>
    </div>
  );
}

function Watermark() {
  return (
    <div className="pointer-events-none absolute bottom-0 left-[850px] z-20 flex w-[220px] flex-col items-center">
      <span dir="rtl" className="font-['DejaVu_Sans',sans-serif] text-[62px] font-bold leading-[70px] text-[#dddcdb] [-webkit-text-stroke:5px_#dddcdb]">نفـذلى</span>
      <svg className="-mt-[8px] ml-[18px] self-start" width="30" height="15" fill="#b9b9b9"><circle cx="7" cy="8" r="7" /><circle cx="22" cy="8" r="7" /></svg>
      <span className="-mt-[4px] font-[Roboto] text-[36px] font-semibold leading-[40px] text-[#b9b9b9]">nafezly.com</span>
    </div>
  );
}

export default function App() {
  return (
    <div className="relative flex min-h-screen flex-col bg-[#f3f2f1] font-['Open_Sans',sans-serif]">
      <TitleBar />
      <Ribbon />
      <div className="flex flex-1 text-[#252423]">
        <div className="flex min-w-0 flex-1 flex-col">
          <div className="flex flex-1">
            <ViewRail />
            <ReportPage />
            <Pane title="Filters" icon={<FunnelIcon />} className="w-[42px] border-l border-[#a19f9d] bg-white" />
          </div>
          <PageTabs />
        </div>
        <Pane title="Visualizations" className="w-[43px] border-l border-[#e1dfdd]" />
        <Pane title="Data" className="w-[43px] border-l border-[#e1dfdd]" />
      </div>
      <StatusBar />
      <Taskbar />
      <Watermark />
    </div>
  );
}
